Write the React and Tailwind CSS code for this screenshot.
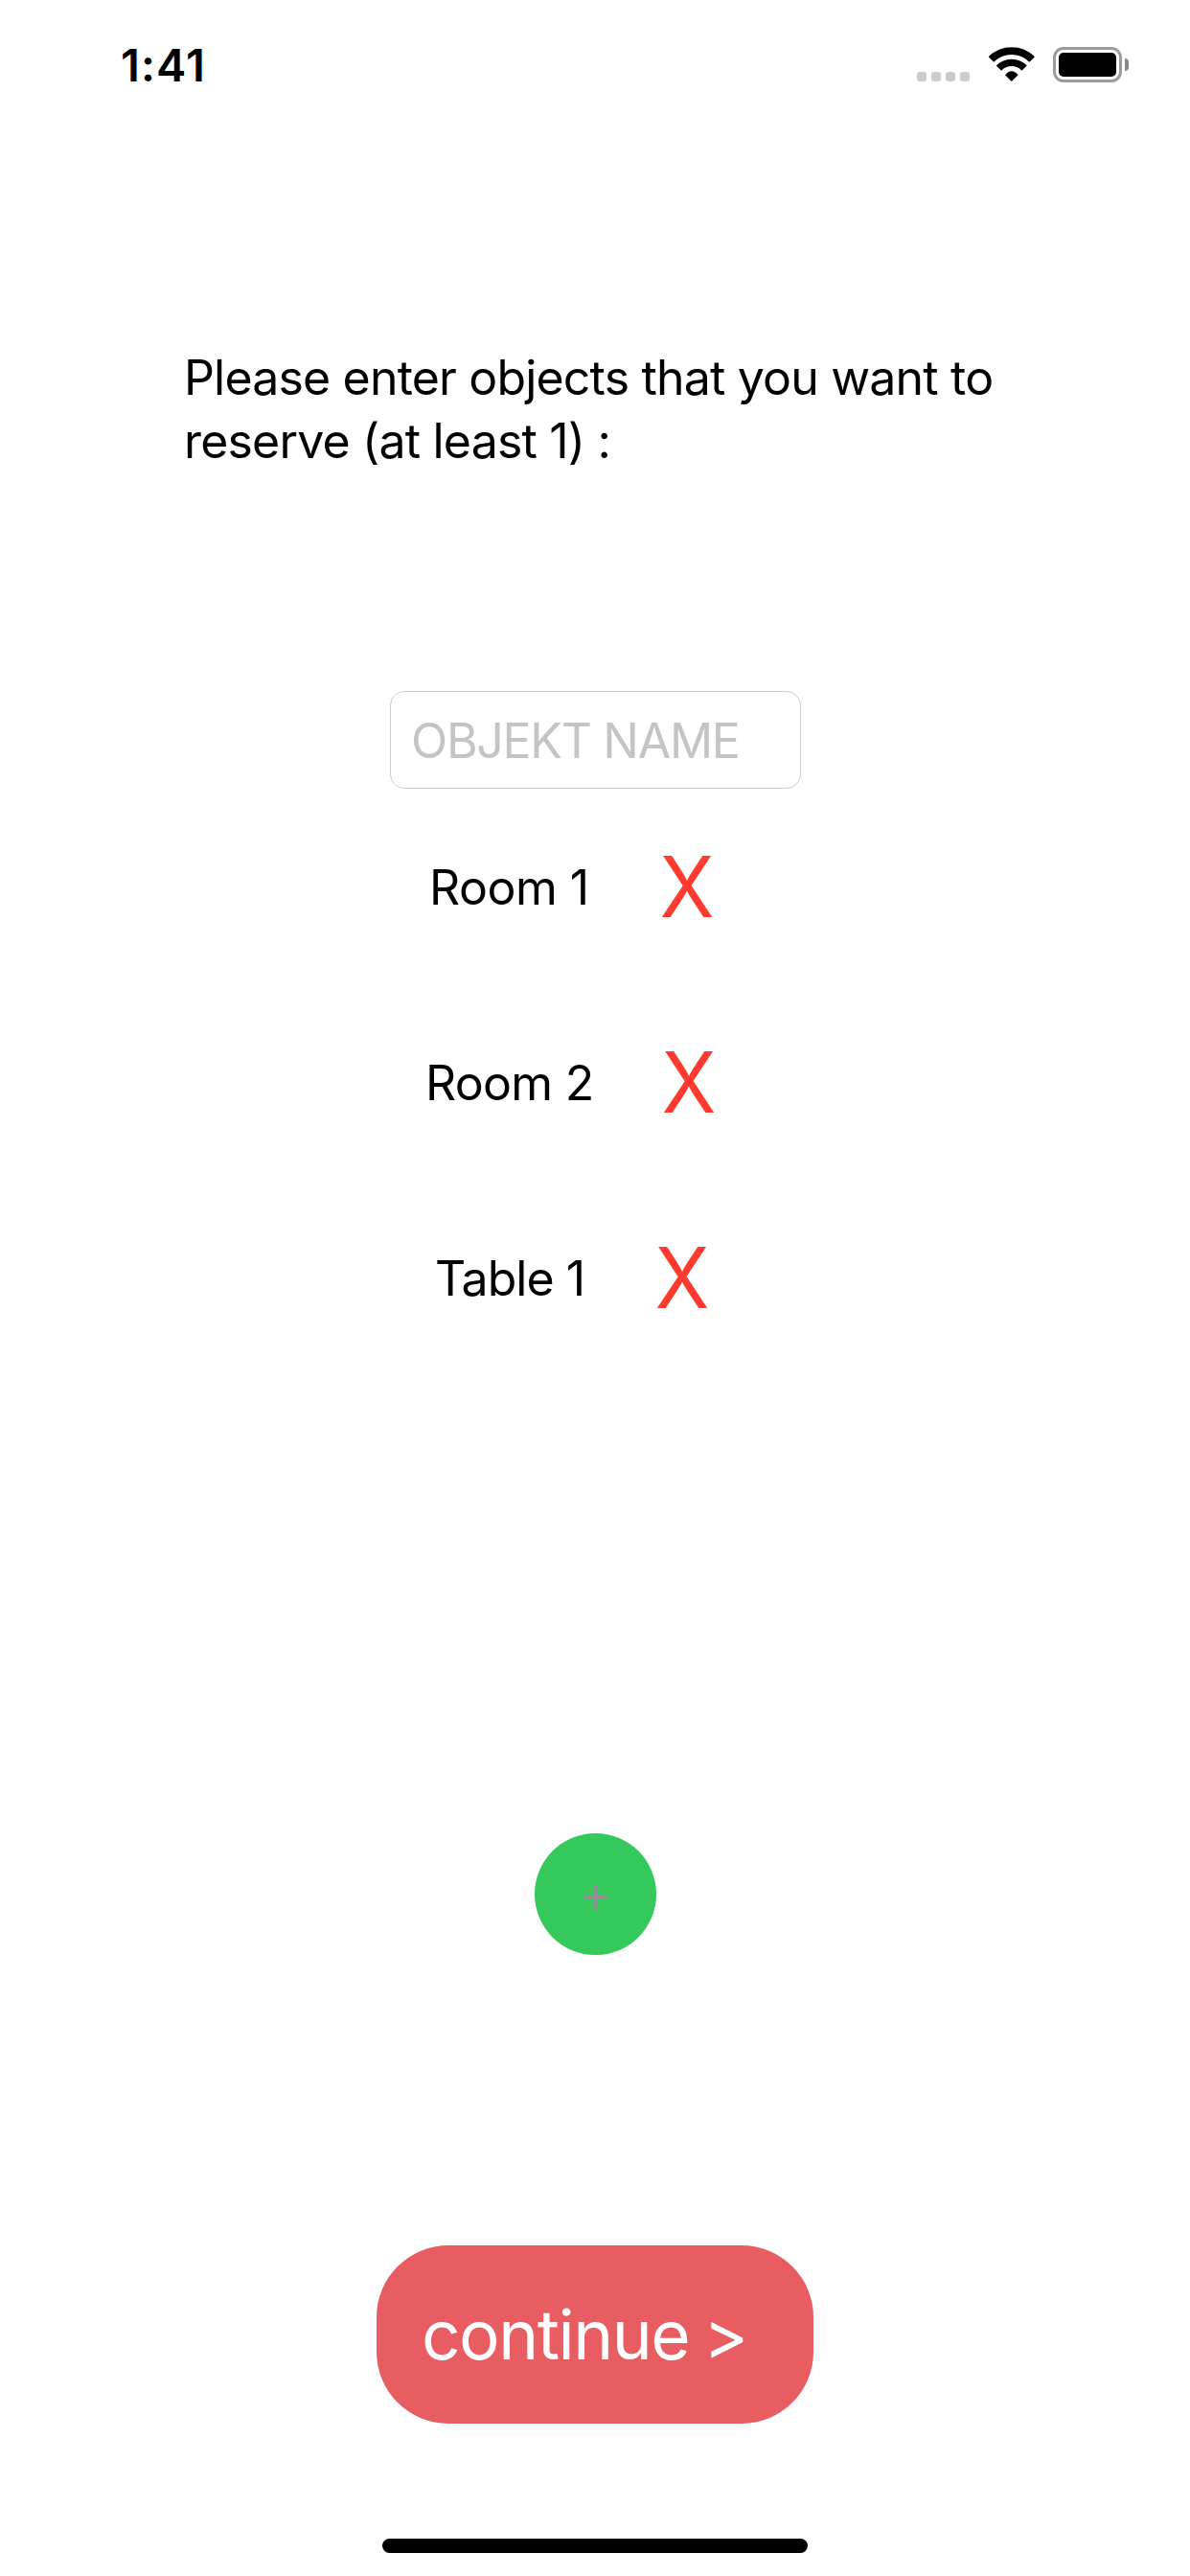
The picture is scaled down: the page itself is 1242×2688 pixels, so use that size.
const items = [
  { name: 'Room 1', row: 'pl-[448px]', label: 'w-[239px] tracking-[-0.5px]' },
  { name: 'Room 2', row: 'pl-[444px]', label: 'w-[245px] tracking-[-0.7px]' },
  { name: 'Table 1', row: 'pl-[454px]', label: 'w-[228px] tracking-[-1px]' },
];

function WifiIcon() {
  return (
    <svg className="ml-[20px] h-[36px] w-[48px]" viewBox="0 0 48 36" fill="none" stroke="#000">
      <path d="M2.4 12.9A30.3 30.3 0 0 1 45.2 12.9" strokeWidth="7.8" />
      <path d="M10.5 22.1A18.4 18.4 0 0 1 37.1 22.1" strokeWidth="7.4" />
      <path d="M23.8 36L17 29.2Q23.8 21.2 30.6 29.2Z" fill="#000" stroke="none" />
    </svg>
  );
}

function Battery() {
  return (
    <div className="ml-[19px] flex items-center">
      <div className="h-[37px] w-[72px] rounded-[11px] border-3 border-[#9b9b9b] p-[3px]">
        <div className="h-full w-full rounded-[5px] bg-black" />
      </div>
      <div className="ml-[3px] h-[13px] w-[4px] rounded-r-full bg-[#8a8a8a]" />
    </div>
  );
}

function StatusBar() {
  return (
    <header className="flex h-[132px] items-start justify-between pt-[49px] pr-[64px] pl-[126px]">
      <span className="h-[37px] text-[47px] leading-[37px] font-semibold tracking-[1.1px]">1:41</span>
      <div className="flex h-[37px] items-start">
        <div className="mt-[26px] flex gap-[5px]">
          {[0, 1, 2, 3].map((i) => (
            <span key={i} className="size-[10px] rounded-[3px] bg-[#cbcbcb]" />
          ))}
        </div>
        <WifiIcon />
        <Battery />
      </div>
    </header>
  );
}

export default function App() {
  return (
    <div className="flex h-[2688px] w-[1242px] flex-col overflow-hidden bg-white font-['Inter',sans-serif] text-black">
      <StatusBar />
      <p className="mt-[229px] ml-[192px] h-[132px] w-[900px] text-[50px] leading-[66px] tracking-[-0.82px]">
        Please enter objects that you want to
        <br />
        reserve (at least 1) :
      </p>
      <input
        className="mt-[228px] ml-[407px] h-[102px] w-[429px] rounded-[15px] border border-[#cccccc] pt-[2px] pl-[21px] text-[50px] tracking-[-1.3px] placeholder:text-[#c4c4c6] placeholder:opacity-100"
        placeholder="OBJEKT NAME"
      />
      <ul className="h-[1090px]">
        {items.map((item) => (
          <li key={item.name} className={`flex h-[204px] items-center ${item.row}`}>
            <span className={`pt-[2px] text-[50px] whitespace-nowrap ${item.label}`}>{item.name}</span>
            <button className="scale-x-[0.95] text-[88px] leading-none text-[#ff3b30]">X</button>
          </li>
        ))}
      </ul>
      <button className="ml-[558px] flex size-[127px] items-center justify-center rounded-full bg-[#35c85a] text-[53px] text-[#8e8e93]">
        +
      </button>
      <button className="mt-[303px] ml-[393px] h-[186px] w-[456px] rounded-[75px] bg-[#e85d62] pl-[47px] text-left text-[71px] tracking-[-1.45px] [word-spacing:-3.5px] text-white">
        continue &gt;
      </button>
      <div className="mt-[120px] ml-[399px] h-[15px] w-[444px] rounded-full bg-black" />
    </div>
  );
}
